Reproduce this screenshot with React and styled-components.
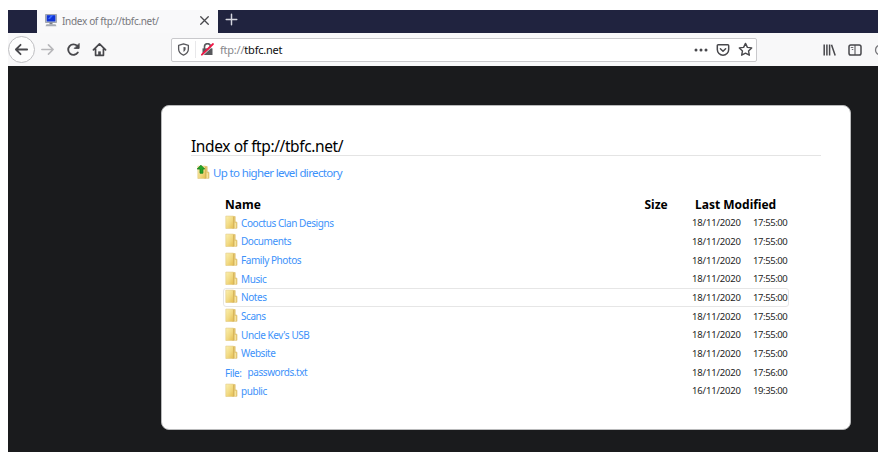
import React from "react";
import styled, { createGlobalStyle } from "styled-components";

const GlobalStyle = createGlobalStyle`
  * { box-sizing: border-box; }
  html, body { margin: 0; background: #fff; }
  body { font-family: "Noto Sans", "Open Sans", sans-serif; overflow: hidden; }
  svg { display: block; flex: none; }
`;

const Window = styled.div`
  width: 870px;
  height: 442px;
  margin: 10px 0 0 8px;
  overflow: hidden;
  display: flex;
  flex-direction: column;
  background: #1a1b1d;
`;

const TabStrip = styled.div`
  height: 23px;
  flex: none;
  display: flex;
  padding-left: 29px;
  background: #20233f;
`;

const Tab = styled.div`
  width: 181px;
  height: 24px;
  display: flex;
  align-items: center;
  padding: 0 8px 3px;
  background: #f9f9fa;
`;

const TabTitle = styled.span`
  flex: 1;
  margin-left: 5px;
  font-size: 10px;
  line-height: 14px;
  letter-spacing: ${(p) => p.$spacing}px;
  white-space: nowrap;
  color: #77777c;
`;

const NewTab = styled.div`
  padding: 3px 0 0 7px;
`;

const Toolbar = styled.div`
  height: 33px;
  flex: none;
  display: flex;
  align-items: center;
  overflow: hidden;
  background: #f8f8f9;
`;

const BackButton = styled.div`
  width: 27px;
  height: 27px;
  flex: none;
  display: flex;
  align-items: center;
  justify-content: center;
  border: 1px solid #bfbfc2;
  border-radius: 50%;
  background: #fdfdfd;
`;

const NavIcons = styled.div`
  width: 136px;
  flex: none;
  display: flex;
  gap: 11px;
  padding-left: 5px;
`;

const UrlBar = styled.div`
  width: 586px;
  height: 24px;
  flex: none;
  display: flex;
  align-items: center;
  padding: 0 3px 0 5px;
  border: 1px solid #c9c9cc;
  border-radius: 2px;
  background: #fff;
`;

const Divider = styled.i`
  width: 1px;
  height: 17px;
  margin: 0 5px;
  background: #e8e8ea;
`;

const Url = styled.span`
  flex: 1;
  margin-left: 6px;
  padding-top: 1px;
  font-size: 11px;
  line-height: 16px;
  letter-spacing: ${(p) => p.$spacing}px;
  color: #87878b;
  b { font-weight: 400; color: #0c0c0d; }
`;

const UrlActions = styled.div`
  display: flex;
  align-items: center;
  gap: 8px;
`;

const ToolIcons = styled.div`
  display: flex;
  gap: 12px;
  margin-left: 66px;
`;

const Page = styled.main`
  flex: 1;
  padding: 39px 0 0 153px;
`;

const Card = styled.section`
  width: 690px;
  height: 325px;
  padding: 30px 29px 0 29px;
  border: 1px solid #b9babb;
  border-radius: 8px;
  background: #fff;
`;

const Heading = styled.h1`
  height: 20px;
  margin: 0;
  border-bottom: 1px solid #e4e4e4;
  font-size: 15.5px;
  font-weight: 400;
  line-height: 20px;
  letter-spacing: ${(p) => p.$spacing}px;
  white-space: nowrap;
  color: #000;
`;

const UpLink = styled.a`
  display: flex;
  align-items: center;
  height: 17px;
  margin: 8px 0 0 6px;
  gap: 3px;
  font-size: 11.5px;
  line-height: 16px;
  letter-spacing: ${(p) => p.$spacing}px;
  color: #3d92fa;
`;

const Listing = styled.div`
  width: 566px;
  margin: 14px 0 0 32px;
`;

const HeaderRow = styled.div`
  display: grid;
  grid-template-columns: 419.5px 50.5px 1fr;
  height: 18.3px;
  padding-left: 2px;
  font-size: 12px;
  font-weight: 700;
  line-height: 19px;
  white-space: nowrap;
  color: #000;
`;

const Row = styled.div`
  display: grid;
  grid-template-columns: 467px 61px 1fr;
  align-items: center;
  height: 18.7px;
  padding-left: 1px;
  border: 1px solid ${(p) => (p.$active ? "#e6e6e6" : "transparent")};
  border-radius: 3px;
`;

const EntryLink = styled.a`
  display: flex;
  align-items: center;
  gap: 3px;
  font-size: 10px;
  line-height: 14px;
  letter-spacing: -0.43px;
  white-space: nowrap;
  color: #3d92fa;
  svg { margin-top: -1px; }
`;

const FileLabel = styled.span`
  margin-right: 3px;
  padding-top: 2px;
`;

const Stamp = styled.span`
  padding-top: 1px;
  font-size: 9.5px;
  line-height: 14px;
  letter-spacing: ${(p) => p.$spacing}px;
  white-space: nowrap;
  color: #242424;
`;

const Stroke = ({ size = 15, width = 1.7, color = "#48484c", children }) => (
  <svg width={size} height={size} viewBox="0 0 16 16" fill="none" stroke={color}
    strokeWidth={width} strokeLinecap="round" strokeLinejoin="round">{children}</svg>
);

const FolderIcon = ({ up }) => (
  <svg width="13" height="15" viewBox="0 0 13 15">
    <defs>
      <linearGradient id="folder" x1="0" y1="0" x2="1" y2="1">
        <stop offset="0" stopColor="#fbf0b0" />
        <stop offset="0.55" stopColor="#f1d981" />
        <stop offset="1" stopColor="#e5bd4e" />
      </linearGradient>
    </defs>
    <path d="M7 1.5h3.2v5.2l1.8.6v6H7z" fill="#e9ce78" stroke="#dabb6a" strokeWidth=".6" />
    <path d="M.8 1.1h7.700v12.400H.8z" fill="url(#folder)" stroke="#e3ca82" strokeWidth=".6" />
    <path d="M8.700 1.800v11.500" stroke="#cfa94e" strokeWidth=".8" />
    <path d="M10.300 8v5" stroke="#f9e9a5" strokeWidth="1" />
    {up && <path d="M3.900.2 7.700 4H5.900v4.200H3V4H.2z" fill="#24a52a" stroke="#14801b" strokeWidth=".8" />}
  </svg>
);

const MonitorIcon = () => (
  <svg width="12" height="13" viewBox="0 0 12 13">
    <path d="M.5.5h11v8H.5z" fill="#bfc3ca" stroke="#9298a2" strokeWidth=".8" />
    <path d="M1.700 1.200h8.700v6.300H1.700z" fill="#1034d6" />
    <path d="M6 1.200h2.400L5 5H3z" fill="#3a6cff" />
    <path d="M4.500 8.500h3v2h-3z" fill="#7c818a" />
    <path d="M1.500 10.300h9l1 2H.5z" fill="#a6abb3" />
  </svg>
);

const ShieldIcon = () => (
  <Stroke size={13} width={1.600} color="#58585c">
    <path d="M8 1.200 14 2.800v4.600c0 3.400-2.500 6.100-6 7.400-3.500-1.300-6-4-6-7.400V2.800z" />
    <path d="M8 4.800v6.200c1.700-.9 2.600-2.200 2.600-3.900V5.300z" fill="#58585c" stroke="none" />
  </Stroke>
);

const LockIcon = () => (
  <svg width="13" height="13" viewBox="0 0 13 13" fill="none">
    <path d="M3.500 6V3.700a3 3 0 0 1 6 0V6" stroke="#58585c" strokeWidth="1.600" />
    <path d="M1.500 5.400h10v6.600h-10z" fill="#58585c" />
    <path d="M1.600 12.600 12.800 2" stroke="#fff" strokeWidth="1" />
    <path d="M.9 11.700 12 1" stroke="#f01846" strokeWidth="1.800" strokeLinecap="round" />
  </svg>
);

const LibraryIcon = () => (
  <svg width="13" height="14" viewBox="0 0 13 14" fill="none" stroke="#48484c" strokeWidth="1.500">
    <path d="M1.200 1.500v11M3.900 1.500v11M6.600 1.500v11M8.500 1.800l3.700 10.600" />
  </svg>
);

const SidebarIcon = () => (
  <svg width="14" height="14" viewBox="0 0 14 14" fill="none" stroke="#48484c">
    <rect x="1" y="2" width="12" height="10" rx="1.800" strokeWidth="1.500" />
    <path d="M7 2v10" strokeWidth="1" />
    <path d="M2.800 4.500h2.500M3.800 6.500h1.500" strokeWidth=".8" />
  </svg>
);

const entries = [
  ["Cooctus Clan Designs"],
  ["Documents"],
  ["Family Photos"],
  ["Music"],
  ["Notes"],
  ["Scans"],
  ["Uncle Kev's USB"],
  ["Website"],
  ["passwords.txt", "18/11/2020", "17:56:00", true],
  ["public", "16/11/2020", "19:35:00"],
];

const Entry = ({ name, date, time, file, active }) => (
  <Row $active={active}>
    <EntryLink>
      {file ? <FileLabel>File:</FileLabel> : <FolderIcon />}
      {name}
    </EntryLink>
    <Stamp $spacing={-0.17}>{date}</Stamp>
    <Stamp $spacing={-0.42}>{time}</Stamp>
  </Row>
);

export default function App() {
  return (
    <>
      <GlobalStyle />
      <Window>
        <TabStrip>
          <Tab>
            <MonitorIcon />
            <TabTitle $spacing={-0.32}>Index of ftp://tbfc.net/</TabTitle>
            <Stroke size={11} width={1.900}><path d="m2.500 2.500 11 11m0-11-11 11" /></Stroke>
          </Tab>
          <NewTab>
            <Stroke size={13} width={1.800} color="#d5d6df"><path d="M8 1.500v13M1.500 8h13" /></Stroke>
          </NewTab>
        </TabStrip>
        <Toolbar>
          <BackButton>
            <Stroke width={1.900}><path d="M14 8H2m5-5L2 8l5 5" /></Stroke>
          </BackButton>
          <NavIcons>
            <Stroke color="#b7b7ba"><path d="M2 8h12M9 3l5 5-5 5" /></Stroke>
            <Stroke width={2}><path d="M12.600 11.200A5.600 5.600 0 1 1 12 4.200" /><path d="M14 2v4.800H9.200z" fill="#48484c" strokeWidth="1" /></Stroke>
            <Stroke width={1.800}><path d="m1.500 8.500 6.500-6.500 6.500 6.500M3.800 7.500v6.700h8.400V7.500" /><path d="M8 14v-4" strokeWidth="2.800" strokeLinecap="butt" /></Stroke>
          </NavIcons>
          <UrlBar>
            <ShieldIcon />
            <Divider />
            <LockIcon />
            <Url $spacing={-0.22}>ftp://<b>tbfc.net</b></Url>
            <UrlActions>
              <svg width="14" height="4" viewBox="0 0 14 4" fill="#48484c"><circle cx="2" cy="2" r="1.500" /><circle cx="7" cy="2" r="1.500" /><circle cx="12" cy="2" r="1.500" /></svg>
              <Stroke size={14}><path d="M2.500 2h11c.7 0 1 .4 1 1v4.500a6.500 6.500 0 0 1-13 0V3c0-.6.3-1 1-1z" /><path d="m5 6.500 3 3 3-3" /></Stroke>
              <Stroke size={15} width={1.500}><path d="m8 1.500 2 4.200 4.600.6-3.400 3.200.9 4.600L8 11.900l-4.100 2.200.9-4.600L1.400 6.300 6 5.700z" /></Stroke>
            </UrlActions>
          </UrlBar>
          <ToolIcons>
            <LibraryIcon />
            <SidebarIcon />
            <svg width="14" height="14" viewBox="0 0 14 14" fill="none" stroke="#77777b"><circle cx="6.500" cy="7" r="5" strokeWidth="1.300" /></svg>
          </ToolIcons>
        </Toolbar>
        <Page>
          <Card>
            <Heading $spacing={-0.4}>Index of ftp://tbfc.net/</Heading>
            <UpLink $spacing={-0.64}><FolderIcon up />Up to higher level directory</UpLink>
            <Listing>
              <HeaderRow>
                <span>Name</span>
                <span>Size</span>
                <span>Last Modified</span>
              </HeaderRow>
              {entries.map(([name, date = "18/11/2020", time = "17:55:00", file]) => (
                <Entry key={name} name={name} date={date} time={time} file={file} active={name === "Notes"} />
              ))}
            </Listing>
          </Card>
        </Page>
      </Window>
    </>
  );
}
